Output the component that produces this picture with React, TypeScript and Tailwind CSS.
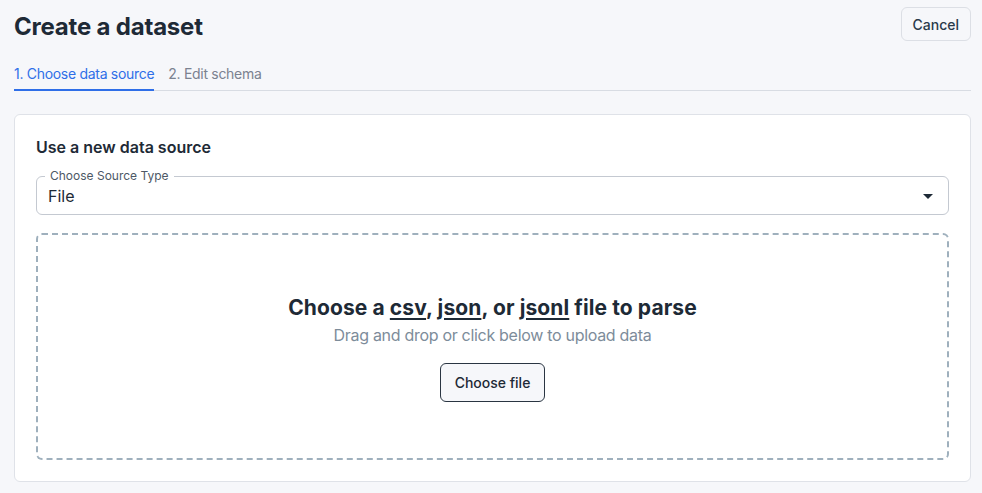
export default function App() {
  return (
    <div
      className="min-h-[493px] w-full bg-[#f6f7fa] pt-[11px] pr-[11px] pb-3 pl-[14px] text-[#1e2a36]"
      style={{ fontFamily: 'Inter, "Noto Sans", sans-serif' }}
    >
      {/* Header */}
      <div className="flex items-start justify-between">
        <h1 className="pt-[1px] text-[24px] font-bold leading-[30px] tracking-[-0.2px] text-[#1e2a36]">
          Create a dataset
        </h1>
        <button className="mt-[-4px] h-[34px] rounded-md border border-[#dcdfe5] bg-[#f6f7fa] px-[11px] text-[14px] font-medium text-[#2a3a4a]">
          Cancel
        </button>
      </div>

      {/* Tabs */}
      <div className="mt-[22px] flex border-b border-[#d8dce3] text-[14px] tracking-[-0.3px]">
        <div className="-mb-[1px] border-b-2 border-[#2f6fe8] pb-[5px] leading-[20px] text-[#2f6fe8]">
          1. Choose data source
        </div>
        <div className="ml-[14px] pb-[5px] leading-[20px] text-[#7b8290]">2. Edit schema</div>
      </div>

      {/* Card */}
      <div className="mt-[23px] rounded-md border border-[#dfe2e8] bg-white px-[21px] pt-[20px] pb-[21px]">
        <h2 className="text-[16px] font-semibold leading-[24px] text-[#1e2a36]">Use a new data source</h2>

        {/* Select */}
        <div className="relative mt-[17px] flex h-[39px] items-center justify-between rounded-md border border-[#c4c9d1] pr-[14px] pl-[11px]">
          <span className="absolute -top-[9px] left-[8px] bg-white px-[5px] text-[12px] leading-[16px] text-[#4d5866]">
            Choose Source Type
          </span>
          <span className="text-[16px] text-[#1e2a36]">File</span>
          <svg width="12" height="12" viewBox="0 0 12 12" className="text-[#1e2a36]">
            <path d="M1 4h10L6 9z" fill="currentColor" />
          </svg>
        </div>

        {/* Drop zone */}
        <div className="mt-[18px] flex h-[227px] flex-col items-center justify-center rounded-md border-2 border-dashed border-[#9fb0bd] pt-[2px]">
          <div className="text-[21px] font-bold leading-[28px] tracking-[0.1px] text-[#1e2a36]">
            Choose a <span className="underline underline-offset-[3px]">csv</span>,{' '}
            <span className="underline underline-offset-[3px]">json</span>, or{' '}
            <span className="underline underline-offset-[3px]">jsonl</span> file to parse
          </div>
          <div className="mt-[1px] text-[16px] leading-[24px] tracking-[-0.3px] text-[#7d8c9a]">
            Drag and drop or click below to upload data
          </div>
          <button className="mt-[16px] h-[39px] rounded-md border border-[#2a3542] bg-[#f6f7fa] px-[14px] text-[14px] font-medium text-[#1e2a36]">
            Choose file
          </button>
        </div>
      </div>
    </div>
  );
}
